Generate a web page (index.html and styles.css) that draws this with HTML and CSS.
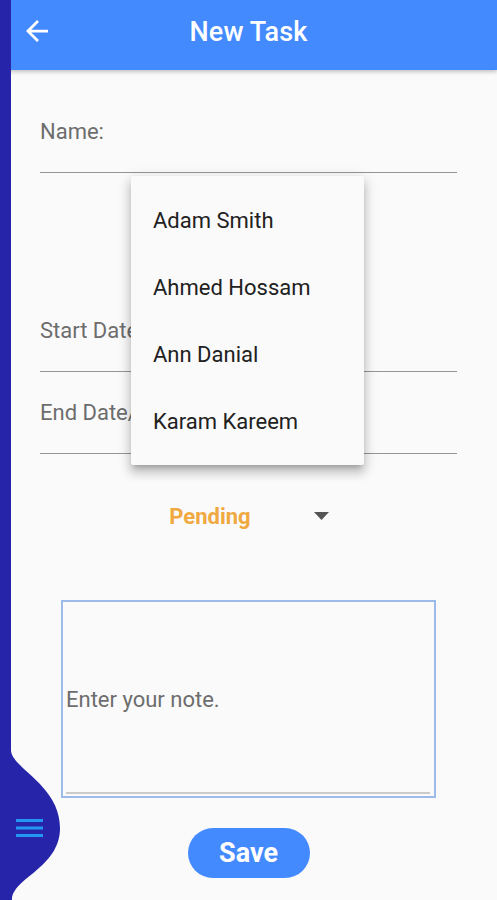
FILE: index.html
```html
<!DOCTYPE html>
<html lang="en">
<head>
<meta charset="utf-8">
<title>New Task</title>
<link rel="stylesheet" href="styles.css">
</head>
<body>
<div class="screen">
  <header class="appbar">
    <svg class="back" viewBox="4 4 16 16" width="22" height="22" aria-hidden="true">
      <path d="M20 11H7.83l5.59-5.59L12 4l-8 8 8 8 1.41-1.41L7.83 13H20v-2z" fill="#ffffff"/>
    </svg>
    <h1 class="title">New Task</h1>
  </header>

  <main class="form">
    <div class="field"><span class="label">Name:</span></div>
    <div class="assignee-slot"></div>
    <div class="field"><span class="label">Start Date/Time:</span></div>
    <div class="field field-next"><span class="label">End Date/Time:</span></div>

    <div class="status">
      <span class="status-text">Pending</span>
      <svg class="caret" viewBox="0 0 15 8" width="15" height="8" aria-hidden="true">
        <polygon points="0,0 15,0 7.5,8" fill="#555555"/>
      </svg>
    </div>

    <div class="note-box">
      <div class="note-field"><span class="note-placeholder">Enter your note.</span></div>
    </div>

    <div class="actions"><button class="save">Save</button></div>
  </main>

  <ul class="menu">
    <li class="menu-item">Adam Smith</li>
    <li class="menu-item">Ahmed Hossam</li>
    <li class="menu-item">Ann Danial</li>
    <li class="menu-item">Karam Kareem</li>
  </ul>

  <svg class="drawer-handle" viewBox="0 0 64 900" width="64" height="900" aria-hidden="true">
    <path d="M0 0H11V750C11 768 60 785 60 828C60 868 12 878 12 900H0Z" fill="#2624a9"/>
    <rect x="16" y="819" width="27" height="3" fill="#2196f3"/>
    <rect x="16" y="826.5" width="27" height="3" fill="#2196f3"/>
    <rect x="16" y="834" width="27" height="3" fill="#2196f3"/>
  </svg>
</div>
</body>
</html>
```

FILE: styles.css
```css
* { box-sizing: border-box; }

html, body {
  margin: 0;
  padding: 0;
  background: #fafafa;
}

body {
  font-family: Roboto, "Liberation Sans", Arial, sans-serif;
  width: 497px;
  height: 900px;
  overflow: hidden;
}

.screen {
  position: relative;
  width: 497px;
  height: 900px;
  background: #fafafa;
}

.appbar {
  height: 70px;
  background: #448aff;
  display: flex;
  align-items: center;
  justify-content: center;
  padding-bottom: 7px;
  position: relative;
  box-shadow: 0 2px 4px rgba(0, 0, 0, 0.22);
  z-index: 1;
}

.back {
  position: absolute;
  left: 26px;
  top: 20px;
}

.title {
  margin: 0;
  color: #ffffff;
  font-size: 27px;
  line-height: 30px;
  font-weight: 500;
  letter-spacing: 0.1px;
}

.form {
  padding: 49px 40px 0 40px;
}

.field {
  border-bottom: 1px solid #959595;
  padding-bottom: 27px;
}

.field-next {
  margin-top: 28px;
}

.label {
  display: block;
  font-size: 22px;
  line-height: 26px;
  color: #6d6d6d;
}

.assignee-slot {
  height: 145px;
}

.status {
  margin-top: 50px;
  display: flex;
  justify-content: center;
  align-items: center;
  gap: 63px;
  padding-left: 1px;
  height: 26px;
}

.status-text {
  font-size: 22px;
  line-height: 26px;
  font-weight: 700;
  color: #f0a941;
}

.caret {
  margin-top: -2px;
}

.note-box {
  margin: 70px 21px 0 21px;
  height: 198px;
  border: 2px solid #9dbbe8;
  padding: 0 4px 2px 3px;
  display: flex;
}

.note-field {
  flex: 1;
  display: flex;
  align-items: center;
  padding-top: 5px;
  border-bottom: 2px solid #cacaca;
}

.note-placeholder {
  font-size: 22px;
  line-height: 26px;
  color: #6d6d6d;
}

.actions {
  margin-top: 30px;
  display: flex;
  justify-content: center;
}

.save {
  width: 122px;
  height: 50px;
  border: none;
  border-radius: 25px;
  background: #448aff;
  color: #ffffff;
  font-family: Roboto, "Liberation Sans", Arial, sans-serif;
  font-size: 27px;
  font-weight: 700;
  padding: 0;
}

.menu {
  position: absolute;
  left: 131px;
  top: 176px;
  width: 233px;
  height: 289px;
  margin: 0;
  padding: 11px 0 0 0;
  list-style: none;
  background: #fafafa;
  border-radius: 2px;
  box-shadow: 0 5px 5px -3px rgba(0, 0, 0, 0.2),
              0 8px 10px 1px rgba(0, 0, 0, 0.14),
              0 3px 14px 2px rgba(0, 0, 0, 0.12);
  z-index: 2;
}

.menu-item {
  height: 67px;
  line-height: 67px;
  padding-left: 22px;
  font-size: 22px;
  color: #212121;
}

.drawer-handle {
  position: absolute;
  left: 0;
  top: 0;
  z-index: 3;
}
```
